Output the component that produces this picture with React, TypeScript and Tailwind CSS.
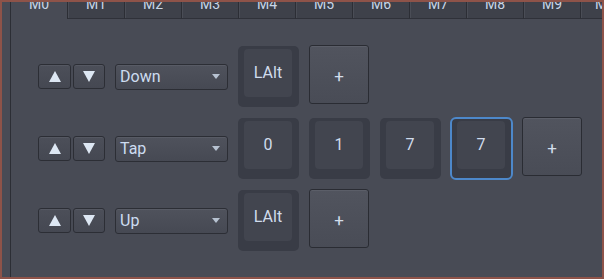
import React from "react";

const tabs = ["M0", "M1", "M2", "M3", "M4", "M5", "M6", "M7", "M8", "M9", "M10"];

function Tri({ up }: { up: boolean }) {
  return (
    <svg width="12" height="11" viewBox="0 0 12 11">
      {up ? (
        <polygon points="6,0 12,11 0,11" fill="#dde7f3" />
      ) : (
        <polygon points="0,0 12,0 6,11" fill="#dde7f3" />
      )}
    </svg>
  );
}

function ArrowBtn({ up }: { up: boolean }) {
  return (
    <div
      className={
        (up ? "w-[33px]" : "w-[32px]") +
        " h-[25px] rounded-[3px] border border-[#2c2e35] bg-gradient-to-b from-[#4c4f59] to-[#454852] shadow-[inset_0_1px_0_#555862] flex items-center justify-center"
      }
    >
      <Tri up={up} />
    </div>
  );
}

function Dropdown({ label }: { label: string }) {
  return (
    <div className="w-[113px] h-[26px] rounded-[3px] border border-[#2c2e35] bg-gradient-to-b from-[#4f525c] to-[#464953] shadow-[inset_0_1px_0_#585b65] flex items-center pl-[4px] pr-[7px]">
      <span className="flex-1 text-[16px] leading-[20px] text-[#cddcf0]">{label}</span>
      <svg width="8" height="5" viewBox="0 0 8 5">
        <polygon points="0,0 8,0 4,5" fill="#b7c2d1" />
      </svg>
    </div>
  );
}

function Key({ label, selected }: { label: string; selected?: boolean }) {
  return (
    <div
      className={
        "w-[61px] h-[61px] shrink-0 rounded-[5px] bg-[#393c46] pt-[3px] pl-[6px] " +
        (selected ? "outline-2 outline-solid outline-[#4d88ca] outline-offset-[-1px]" : "")
      }
    >
      <div className="w-[48px] h-[48px] rounded-[4px] bg-[#42454f] flex items-center justify-center text-[16px] leading-[20px] text-[#d0dcec]">
        {label}
      </div>
    </div>
  );
}

function Plus() {
  return (
    <div className="w-[60px] h-[59px] shrink-0 -mt-[1px] rounded-[3px] border border-[#2a2c33] bg-gradient-to-b from-[#51545e] to-[#494c56] shadow-[inset_0_1px_0_#5b5e68] flex items-center justify-center text-[17px] leading-[20px] text-[#d3deeb] pt-[3px]">
      +
    </div>
  );
}

function Row({ mode, keys, sel }: { mode: string; keys: string[]; sel?: number }) {
  return (
    <div className="flex items-center h-[61px]">
      <div className="flex gap-[2px]">
        <ArrowBtn up />
        <ArrowBtn up={false} />
      </div>
      <div className="ml-[10px]">
        <Dropdown label={mode} />
      </div>
      <div className="ml-[10px] flex items-start gap-[10px]">
        {keys.map((k, i) => (
          <Key key={i} label={k} selected={sel === i} />
        ))}
        <Plus />
      </div>
    </div>
  );
}

export default function App() {
  return (
    <div
      className="w-[604px] h-[279px] border-2 border-[#8e5349] bg-[#484b55] overflow-hidden flex"
      style={{ fontFamily: "Roboto, 'Noto Sans', sans-serif" }}
    >
      <div className="w-[8px] shrink-0" />
      <div className="flex-1 min-w-0 flex flex-col border-l border-[#2c2e35]">
        <div className="flex h-[17px] shrink-0">
          {tabs.map((t, i) => (
            <div
              key={t}
              className={
                "w-[57px] shrink-0 overflow-hidden flex justify-center border-r border-[#2c2e35] " +
                (i === 0 ? "bg-[#484b55]" : "bg-[#3e414a] border-b border-b-[#2f3139] shadow-[inset_1px_0_0_#4a4d56]")
              }
            >
              <span className="block -mt-[5px] text-[14px] leading-[14px] text-[#c9d6e7]">{t}</span>
            </div>
          ))}
          <div className="flex-1 bg-[#3e414a] border-b border-[#2f3139]" />
        </div>
        <div className="flex flex-col gap-[11px] pt-[27px] pl-[27px]">
          <Row mode="Down" keys={["LAlt"]} />
          <Row mode="Tap" keys={["0", "1", "7", "7"]} sel={3} />
          <Row mode="Up" keys={["LAlt"]} />
        </div>
      </div>
    </div>
  );
}
